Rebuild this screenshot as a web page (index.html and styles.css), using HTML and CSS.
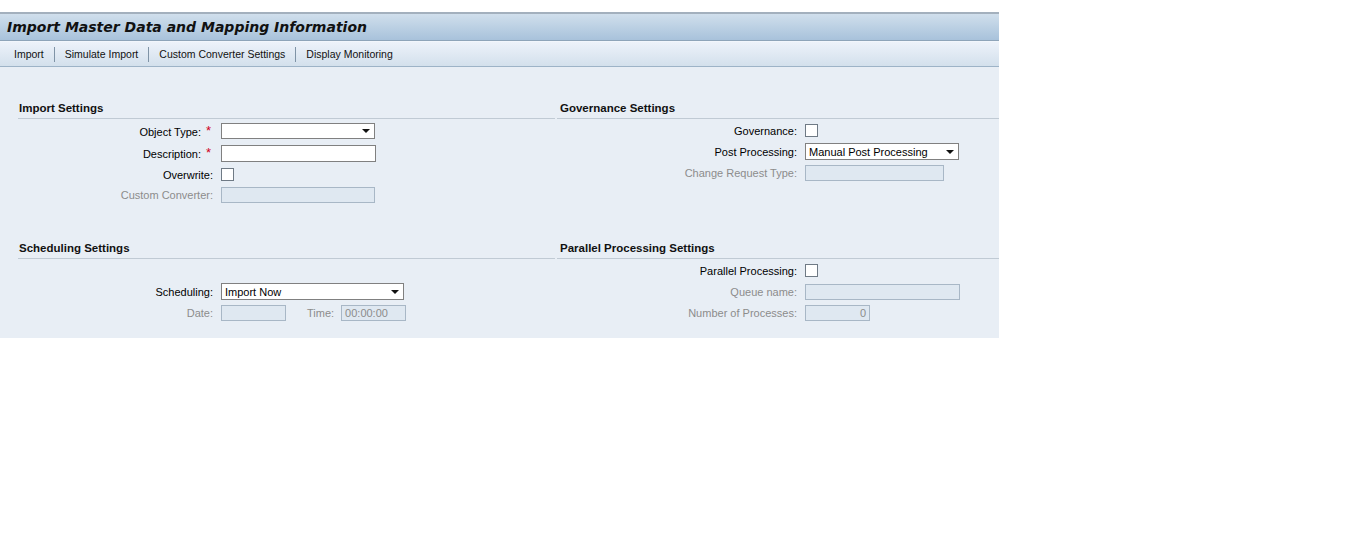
FILE: index.html
```html
<!DOCTYPE html>
<html>
<head>
<meta charset="utf-8">
<link rel="stylesheet" href="styles.css">
</head>
<body>
<div class="app">
  <div class="titlebar"><h1 class="title">Import Master Data and Mapping Information</h1></div>
  <div class="toolbar">
    <span class="tb-item">Import</span><span class="tb-sep"></span>
    <span class="tb-item">Simulate Import</span><span class="tb-sep"></span>
    <span class="tb-item">Custom Converter Settings</span><span class="tb-sep"></span>
    <span class="tb-item">Display Monitoring</span>
  </div>
  <div class="content">
    <div class="grid">
      <section class="sec sec-left">
        <div class="sec-head">Import Settings</div>
        <div class="rows">
          <div class="row tall"><span class="lbl">Object Type:<span class="ast">*</span></span><div class="field select w154 h16"><span class="val"></span><span class="arrow"></span></div></div>
          <div class="row tall"><span class="lbl">Description:<span class="ast">*</span></span><div class="field input w155 h17"></div></div>
          <div class="row"><span class="lbl">Overwrite:</span><div class="check"></div></div>
          <div class="row short"><span class="lbl dis">Custom Converter:</span><div class="field disabled w154 h16"></div></div>
        </div>
      </section>
      <section class="sec sec-right">
        <div class="sec-head">Governance Settings</div>
        <div class="rows">
          <div class="row"><span class="lbl">Governance:</span><div class="check"></div></div>
          <div class="row"><span class="lbl">Post Processing:</span><div class="field select w154 h17"><span class="val">Manual Post Processing</span><span class="arrow"></span></div></div>
          <div class="row"><span class="lbl dis">Change Request Type:</span><div class="field disabled w139 h16"></div></div>
        </div>
      </section>
      <section class="sec sec-left sec-low">
        <div class="sec-head">Scheduling Settings</div>
        <div class="rows">
          <div class="row"></div>
          <div class="row"><span class="lbl">Scheduling:</span><div class="field select w183 h17"><span class="val">Import Now</span><span class="arrow"></span></div></div>
          <div class="row"><span class="lbl dis">Date:</span><div class="field disabled w65 h16"></div><span class="lbl-inline dis">Time:</span><div class="field disabled w65 h16"><span class="val dis-val">00:00:00</span></div></div>
        </div>
      </section>
      <section class="sec sec-right sec-low">
        <div class="sec-head">Parallel Processing Settings</div>
        <div class="rows">
          <div class="row"><span class="lbl">Parallel Processing:</span><div class="check"></div></div>
          <div class="row"><span class="lbl dis">Queue name:</span><div class="field disabled w155 h16"></div></div>
          <div class="row"><span class="lbl dis">Number of Processes:</span><div class="field disabled w65 h16 num"><span class="val dis-val">0</span></div></div>
        </div>
      </section>
    </div>
  </div>
</div>
</body>
</html>
```
FILE: styles.css
```css
* { box-sizing: border-box; }
html, body { margin: 0; padding: 0; background: #ffffff; }
body { font-family: "Liberation Sans", Arial, sans-serif; font-size: 11px; color: #000; }

.app { width: 999px; padding-top: 12px; }

.titlebar {
  height: 29px;
  border-top: 2px solid #a3b0bd;
  border-bottom: 1px solid #8ea4b9;
  background: linear-gradient(#d0dfec, #a8c2db);
  display: flex;
  align-items: center;
  padding-left: 7px;
}
.title {
  margin: 0;
  font-family: "DejaVu Sans", Verdana, sans-serif;
  font-weight: bold;
  font-style: italic;
  font-size: 14px;
  color: #111;
}

.toolbar {
  height: 26px;
  border-top: 1px solid #f2f6fc;
  border-bottom: 1px solid #9db3c7;
  background: linear-gradient(#edf2fa, #d3e0ec);
  display: flex;
  align-items: center;
  padding-left: 4px;
}
.tb-item { padding: 0 10px; font-size: 10.5px; color: #111; white-space: nowrap; }
.tb-sep { width: 1px; height: 15px; background: #7f93a6; }

.content {
  background: #e8eef5;
  padding: 33px 0 15px 18px;
}
.grid {
  display: grid;
  grid-template-columns: 537px 442px;
  column-gap: 2px;
}
.sec-low { margin-top: 35px; }

.sec-head {
  height: 19px;
  border-bottom: 1px solid #c0cad4;
  padding-left: 1px;
  font-weight: bold;
  font-size: 11.5px;
  line-height: 17px;
  color: #111;
}
.sec-right .sec-head { padding-left: 3px; }

.rows { padding-top: 1px; }
.row {
  height: 21px;
  display: flex;
  align-items: center;
}
.row.tall { height: 22px; }
.row.short { height: 20px; }
.lbl {
  width: 195px;
  flex: none;
  text-align: right;
  margin-right: 8px;
  white-space: nowrap;
  color: #000;
}
.sec-right .lbl { width: 240px; }
.ast { color: #d0021b; font-size: 13px; margin-left: 5px; display: inline-block; width: 7px; text-align: left; position: relative; top: -1px; }
.dis { color: #8c8c8c; }
.lbl-inline { margin: 0 7px 0 21px; }

.field {
  flex: none;
  display: flex;
  align-items: center;
  padding: 0 3px;
  overflow: hidden;
  white-space: nowrap;
}
.input, .select { background: #fff; border: 1px solid #808080; }
.disabled { background: #dfe8f1; border: 1px solid #a8b7c6; }
.select .val { flex: 1; }
.arrow {
  width: 0; height: 0;
  border-left: 4px solid transparent;
  border-right: 4px solid transparent;
  border-top: 4px solid #111;
  margin-right: 1px;
}
.dis-val { color: #8c8c8c; }
.num { justify-content: flex-end; }

.w65 { width: 65px; }
.w139 { width: 139px; }
.w154 { width: 154px; }
.w155 { width: 155px; }
.w183 { width: 183px; }
.h16 { height: 16px; }
.h17 { height: 17px; }

.check {
  width: 13px; height: 13px;
  background: #fff;
  border: 1px solid #6f7a85;
  flex: none;
}
```
